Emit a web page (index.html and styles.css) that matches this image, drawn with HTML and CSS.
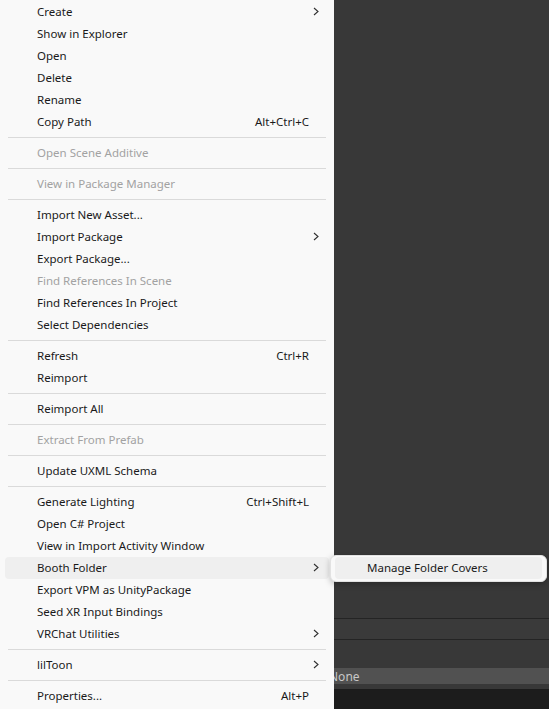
FILE: index.html
```html
<!DOCTYPE html>
<html>
<head>
<meta charset="utf-8">
<link rel="stylesheet" href="styles.css">
</head>
<body>
<div class="editor">
  <div class="area area-top"></div>
  <div class="rule"></div>
  <div class="area area-row"></div>
  <div class="rule"></div>
  <div class="area area-mid"></div>
  <div class="field"><span class="field-text">None</span></div>
  <div class="area area-gap"></div>
  <div class="footer"></div>
</div>

<div class="menu">
  <div class="item"><span class="label">Create</span><span class="arrow"><svg width="6" height="9" viewBox="0 0 6 9"><path d="M1 1 L5 4.5 L1 8" /></svg></span></div>
  <div class="item"><span class="label">Show in Explorer</span><span class="arrow"></span></div>
  <div class="item"><span class="label">Open</span><span class="arrow"></span></div>
  <div class="item"><span class="label">Delete</span><span class="arrow"></span></div>
  <div class="item"><span class="label">Rename</span><span class="arrow"></span></div>
  <div class="item"><span class="label">Copy Path</span><span class="shortcut">Alt+Ctrl+C</span><span class="arrow"></span></div>
  <div class="sep"></div>
  <div class="item disabled"><span class="label">Open Scene Additive</span><span class="arrow"></span></div>
  <div class="sep"></div>
  <div class="item disabled"><span class="label">View in Package Manager</span><span class="arrow"></span></div>
  <div class="sep"></div>
  <div class="item"><span class="label">Import New Asset...</span><span class="arrow"></span></div>
  <div class="item"><span class="label">Import Package</span><span class="arrow"><svg width="6" height="9" viewBox="0 0 6 9"><path d="M1 1 L5 4.5 L1 8" /></svg></span></div>
  <div class="item"><span class="label">Export Package...</span><span class="arrow"></span></div>
  <div class="item disabled"><span class="label">Find References In Scene</span><span class="arrow"></span></div>
  <div class="item"><span class="label">Find References In Project</span><span class="arrow"></span></div>
  <div class="item"><span class="label">Select Dependencies</span><span class="arrow"></span></div>
  <div class="sep"></div>
  <div class="item"><span class="label">Refresh</span><span class="shortcut">Ctrl+R</span><span class="arrow"></span></div>
  <div class="item"><span class="label">Reimport</span><span class="arrow"></span></div>
  <div class="sep"></div>
  <div class="item"><span class="label">Reimport All</span><span class="arrow"></span></div>
  <div class="sep"></div>
  <div class="item disabled"><span class="label">Extract From Prefab</span><span class="arrow"></span></div>
  <div class="sep"></div>
  <div class="item"><span class="label">Update UXML Schema</span><span class="arrow"></span></div>
  <div class="sep"></div>
  <div class="item"><span class="label">Generate Lighting</span><span class="shortcut">Ctrl+Shift+L</span><span class="arrow"></span></div>
  <div class="item"><span class="label">Open C# Project</span><span class="arrow"></span></div>
  <div class="item"><span class="label">View in Import Activity Window</span><span class="arrow"></span></div>
  <div class="item hover"><span class="label">Booth Folder</span><span class="arrow"><svg width="6" height="9" viewBox="0 0 6 9"><path d="M1 1 L5 4.5 L1 8" /></svg></span></div>
  <div class="item"><span class="label">Export VPM as UnityPackage</span><span class="arrow"></span></div>
  <div class="item"><span class="label">Seed XR Input Bindings</span><span class="arrow"></span></div>
  <div class="item"><span class="label">VRChat Utilities</span><span class="arrow"><svg width="6" height="9" viewBox="0 0 6 9"><path d="M1 1 L5 4.5 L1 8" /></svg></span></div>
  <div class="sep"></div>
  <div class="item"><span class="label">lilToon</span><span class="arrow"><svg width="6" height="9" viewBox="0 0 6 9"><path d="M1 1 L5 4.5 L1 8" /></svg></span></div>
  <div class="sep"></div>
  <div class="item"><span class="label">Properties...</span><span class="shortcut">Alt+P</span><span class="arrow"></span></div>
</div>

<div class="submenu">
  <div class="item hover"><span class="label">Manage Folder Covers</span></div>
</div>
</body>
</html>
```
FILE: styles.css
```css
html, body {
  margin: 0;
  padding: 0;
}
body {
  width: 549px;
  height: 709px;
  overflow: hidden;
  position: relative;
  background: #383838;
  font-family: "Noto Sans", "Open Sans", sans-serif;
  font-size: 11.5px;
}
.editor {
  display: flex;
  flex-direction: column;
  height: 709px;
}
.area { background: #383838; }
.area-top { height: 618px; }
.rule { height: 1px; background: #242424; }
.area-row { height: 20px; background: #3a3a3a; }
.area-mid { height: 28px; }
.field {
  height: 16px;
  background: #515151;
  display: flex;
  align-items: center;
  padding-left: 329px;
}
.field-text {
  color: #c8c8c8;
  font-size: 12px;
}
.area-gap { height: 5px; }
.footer { flex: 1; background: #1c1c1c; }

.menu {
  position: absolute;
  left: 0;
  top: 0;
  width: 334px;
  height: 709px;
  background: #f9f9f9;
  padding-top: 1px;
  box-sizing: border-box;
  display: flex;
  flex-direction: column;
}
.item {
  height: 22px;
  margin: 0 5px;
  padding-bottom: 1px;
  box-sizing: border-box;
  border-radius: 4px;
  display: flex;
  align-items: center;
  color: #1a1a1a;
  white-space: nowrap;
  flex-shrink: 0;
}
.item.hover { background: #efefef; }
.item.disabled { color: #a2a2a2; }
.label {
  flex: 1;
  padding-left: 32px;
}
.arrow {
  width: 20px;
  height: 21px;
  display: flex;
  align-items: center;
  padding-left: 4px;
  box-sizing: border-box;
}
.arrow svg path {
  fill: none;
  stroke: #303030;
  stroke-width: 1.1;
}
.sep {
  height: 9px;
  display: flex;
  align-items: center;
  padding: 0 8px;
  flex-shrink: 0;
}
.sep::before {
  content: "";
  flex: 1;
  height: 1px;
  background: #dadada;
}

.submenu {
  position: absolute;
  left: 330px;
  top: 555px;
  width: 217px;
  height: 27px;
  box-sizing: border-box;
  background: #f9f9f9;
  border: 1px solid #e2e2e2;
  border-radius: 6px;
  box-shadow: 0 2px 6px rgba(0, 0, 0, 0.25);
  padding-top: 1px;
}
.submenu .item { margin: 0 4px; }
```
